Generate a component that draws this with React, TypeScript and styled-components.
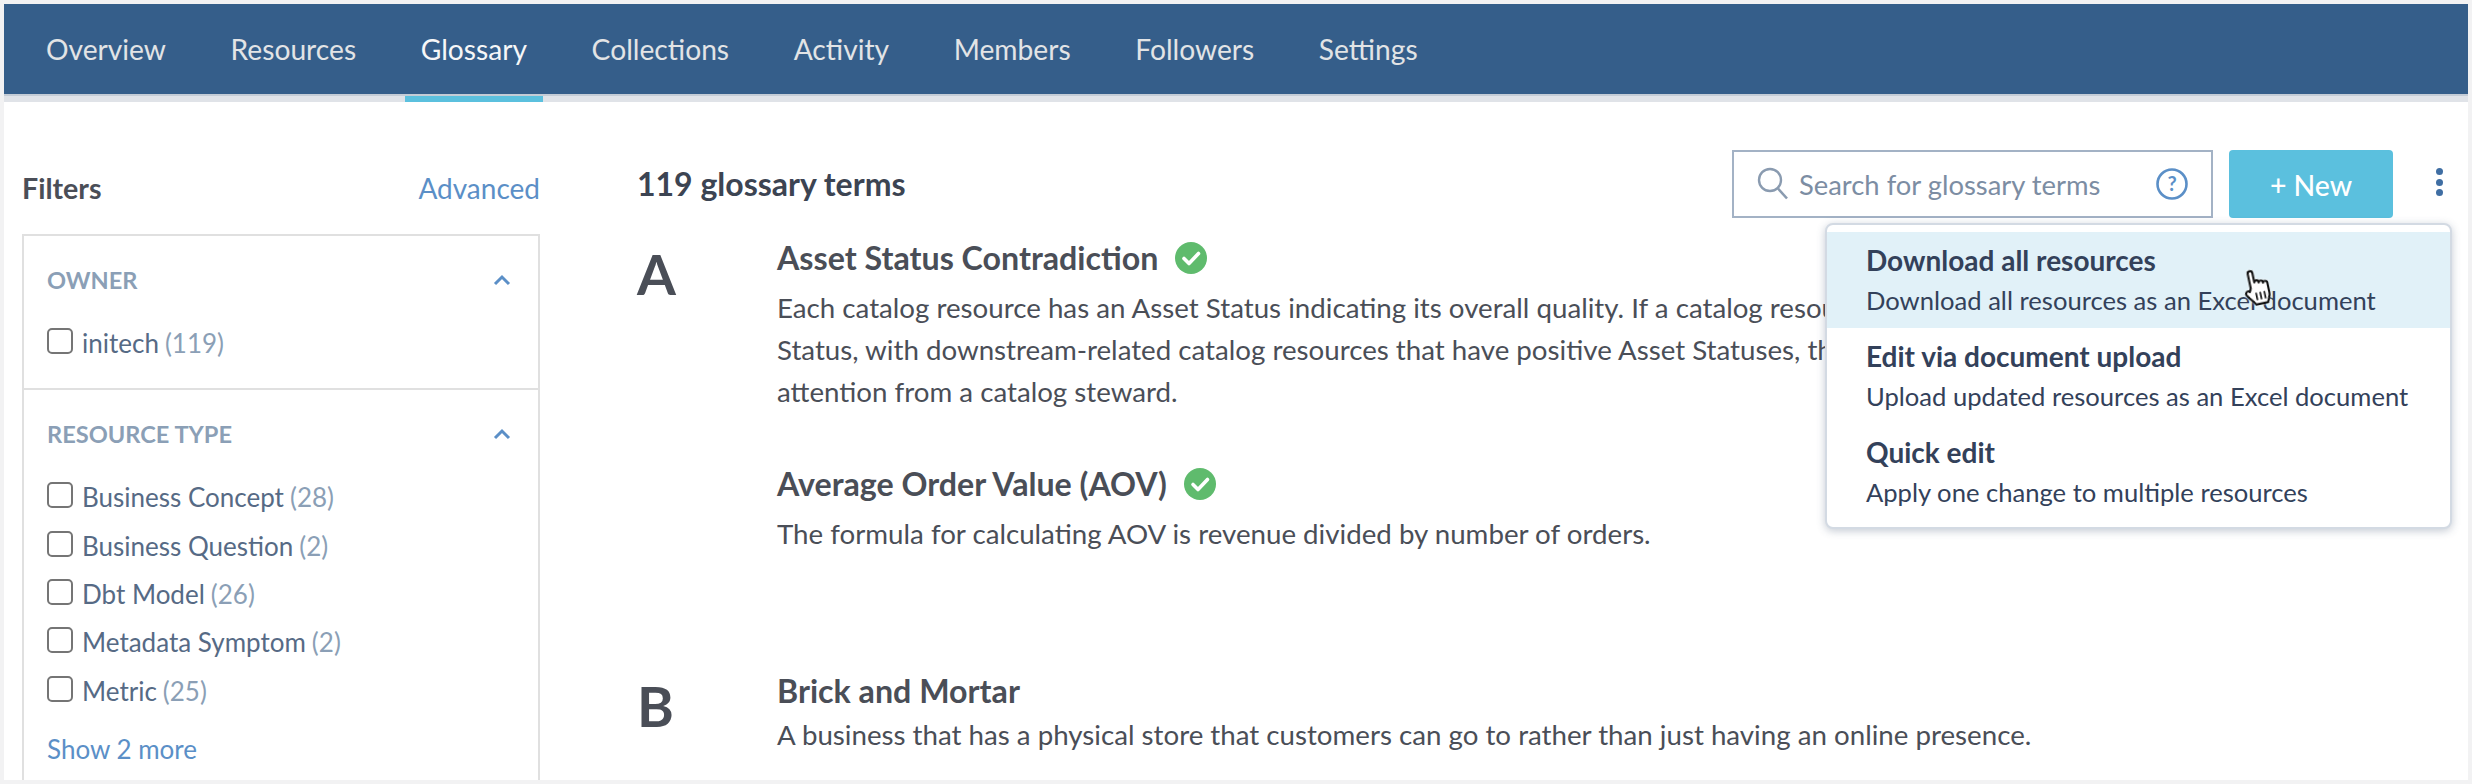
import React from 'react';
import styled, { createGlobalStyle } from 'styled-components';

const Global = createGlobalStyle`
  html, body { margin: 0; padding: 0; background: #f2f2f3; }
  body { font-family: Lato, "Liberation Sans", sans-serif; -webkit-font-smoothing: antialiased; }
  * { box-sizing: border-box; }
`;

const Page = styled.div`
  width: 2472px;
  height: 784px;
  padding: 4px;
  overflow: hidden;
`;
const Frame = styled.div`
  position: relative;
  width: 2464px;
  height: 776px;
  background: #fff;
  overflow: hidden;
`;
const Nav = styled.nav`
  height: 98px;
  background: #e0e3e8;
`;
const NavBar = styled.div`
  height: 90px;
  background: #355e8a;
  display: flex;
  padding-left: 26px;
  box-shadow: 0 2px 0 #c4ccd6;
`;
const Tab = styled.a<{ $active?: boolean }>`
  position: relative;
  display: flex;
  align-items: center;
  height: 90px;
  padding: 0 16px;
  margin-right: 32.6px;
  font-size: 28.2px;
  color: ${p => (p.$active ? '#f6f7f8' : '#e2e4e6')};
  &::after {
    content: '';
    display: ${p => (p.$active ? 'block' : 'none')};
    position: absolute;
    left: 0;
    right: 0;
    top: 92px;
    height: 6px;
    background: #5bc0de;
  }
`;
const Body = styled.div`
  display: flex;
  padding: 0 0 0 18px;
`;
const Sidebar = styled.aside`
  width: 518px;
  flex: none;
  padding-top: 67px;
`;
const SideHead = styled.div`
  display: flex;
  justify-content: space-between;
  align-items: center;
  height: 38px;
  margin-bottom: 27px;
`;
const SideTitle = styled.h3`
  margin: 0;
  font-size: 28.6px;
  line-height: 38px;
  font-weight: 700;
  color: #4a4e57;
`;
const Link = styled.a`
  font-size: 28px;
  color: #5b8fc7;
`;
const FilterBox = styled.div`
  border: 2px solid #e0e0e0;
  border-bottom: 0;
  height: 560px;
`;
const FilterSection = styled.section`
  padding: 26px 23px 0;
  height: 152px;
  & + & {
    border-top: 2px solid #e0e0e0;
    height: 400px;
  }
`;
const FilterHead = styled.div`
  display: flex;
  justify-content: space-between;
  align-items: center;
  height: 36px;
  margin-bottom: 21px;
  padding-right: 4px;
`;
const FilterName = styled.div`
  font-size: 23.6px;
  font-weight: 700;
  color: #8b9fb6;
`;
const Row = styled.label`
  display: flex;
  align-items: center;
  height: 48.4px;
  font-size: 26px;
  color: #566a85;
`;
const Check = styled.span`
  width: 26px;
  height: 26px;
  border: 2px solid #757575;
  border-radius: 5px;
  margin: -4px 9px 0 0;
  flex: none;
`;
const Count = styled.span`
  color: #8b9fb6;
  margin-left: 6px;
`;
const More = styled.a`
  display: block;
  margin-top: 18px;
  font-size: 26px;
  color: #5b8fc7;
`;
const Main = styled.main`
  flex: 1;
  min-width: 0;
  padding: 0 0 0 97px;
`;
const Toolbar = styled.div`
  display: flex;
  align-items: center;
  height: 68px;
  margin: 48px 0 14px;
`;
const Heading = styled.h2`
  margin: 0;
  flex: 1;
  font-size: 32px;
  font-weight: 700;
  color: #3c4452;
  padding-bottom: 2px;
`;
const Search = styled.div`
  width: 481px;
  height: 68px;
  border: 2px solid #a3b2c5;
  display: flex;
  align-items: center;
  padding: 0 23px;
  gap: 10px;
  margin-right: 16px;
`;
const SearchText = styled.span`
  flex: 1;
  font-size: 27.4px;
  color: #7c8da3;
  padding-top: 1px;
`;
const NewButton = styled.button`
  width: 164px;
  height: 68px;
  border: 0;
  border-radius: 4px;
  background: #5bc0de;
  color: #fff;
  font: 500 28.4px Lato, sans-serif;
  padding: 1px 0 0;
  margin-right: 26px;
`;
const Kebab = styled.button`
  width: 40px;
  height: 68px;
  border: 0;
  background: none;
  padding: 0 0 4px;
  margin-right: 9px;
  display: flex;
  flex-direction: column;
  align-items: center;
  justify-content: center;
  gap: 3.5px;
`;
const Dot = styled.i`
  width: 7px;
  height: 7px;
  border-radius: 50%;
  background: #3f6ea3;
`;
const Letter = styled.div<{ $drop: number }>`
  width: 140px;
  flex: none;
  font-size: 56px;
  font-weight: 700;
  color: #4a4e57;
  line-height: 68px;
  margin-top: ${p => p.$drop}px;
`;
const Group = styled.section<{ $top: number }>`
  display: flex;
  margin-top: ${p => p.$top}px;
`;
const Terms = styled.div`
  flex: 1;
  min-width: 0;
`;
const Term = styled.article`
  margin-bottom: 44px;
`;
const TermTitle = styled.h4`
  display: flex;
  align-items: center;
  gap: 17px;
  margin: 0 0 3px;
  min-height: 40px;
  font-size: 32.2px;
  line-height: 40px;
  font-weight: 700;
  color: #4a4e57;
`;
const Badge = styled.svg`
  display: block;
  margin: 10px 0;
`;
const TermText = styled.p`
  margin: 0;
  font-size: 27.7px;
  line-height: 42.2px;
  color: #4a4e57;
  white-space: nowrap;
`;
const Menu = styled.div`
  position: absolute;
  left: 1821px;
  top: 219px;
  width: 627px;
  height: 306px;
  background: #fff;
  border: 2px solid #d3dae3;
  border-radius: 8px;
  box-shadow: 0 2px 8px rgba(60, 80, 110, 0.3);
  padding-top: 7px;
  overflow: hidden;
`;
const MenuItem = styled.div<{ $hover?: boolean }>`
  height: 96px;
  padding: 8px 39px 0;
  background: ${p => (p.$hover ? '#e1f1f8' : 'transparent')};
  color: #33415a;
`;
const MenuTitle = styled.div`
  font-size: 28px;
  font-weight: 700;
  line-height: 40px;
`;
const MenuSub = styled.div`
  font-size: 25.6px;
  line-height: 40px;
  white-space: nowrap;
`;
const Cursor = styled.svg`
  position: absolute;
  left: 2237px;
  top: 264px;
  transform: rotate(-12deg);
  filter: drop-shadow(0 0 1px rgba(255, 255, 255, 0.9));
`;

const CheckBadge = () => (
  <Badge width="32" height="32" viewBox="0 0 32 32">
    <circle cx="16" cy="16" r="16" fill="#5fbb6d" />
    <path d="M9 16.5l5 5 9.500-10" fill="none" stroke="#fff" strokeWidth="3.600" strokeLinecap="round" strokeLinejoin="round" />
  </Badge>
);
const Chevron = () => (
  <svg width="18" height="12" viewBox="0 0 18 12">
    <path d="M2 10l7-7 7 7" fill="none" stroke="#5b8fc7" strokeWidth="3" />
  </svg>
);

const resourceTypes: [string, number][] = [
  ['Business Concept', 28],
  ['Business Question', 2],
  ['Dbt Model', 26],
  ['Metadata Symptom', 2],
  ['Metric', 25],
];
const tabs = ['Overview', 'Resources', 'Glossary', 'Collections', 'Activity', 'Members', 'Followers', 'Settings'];

export default function App() {
  return (
    <Page>
      <Global />
      <Frame>
        <Nav>
          <NavBar>
            {tabs.map(t => (
              <Tab key={t} $active={t === 'Glossary'}>{t}</Tab>
            ))}
          </NavBar>
        </Nav>
        <Body>
          <Sidebar>
            <SideHead>
              <SideTitle>Filters</SideTitle>
              <Link>Advanced</Link>
            </SideHead>
            <FilterBox>
              <FilterSection>
                <FilterHead>
                  <FilterName>OWNER</FilterName>
                  <Chevron />
                </FilterHead>
                <Row><Check />initech<Count>(119)</Count></Row>
              </FilterSection>
              <FilterSection>
                <FilterHead>
                  <FilterName>RESOURCE TYPE</FilterName>
                  <Chevron />
                </FilterHead>
                {resourceTypes.map(([n, c]) => (
                  <Row key={n}><Check />{n}<Count>({c})</Count></Row>
                ))}
                <More>Show 2 more</More>
              </FilterSection>
            </FilterBox>
          </Sidebar>
          <Main>
            <Toolbar>
              <Heading>119 glossary terms</Heading>
              <Search>
                <svg width="32" height="34" viewBox="0 0 32 34">
                  <circle cx="13" cy="13" r="11" fill="none" stroke="#8a9bb0" strokeWidth="2.400" />
                  <path d="M21 21.500l9 10" stroke="#8a9bb0" strokeWidth="2.600" fill="none" />
                </svg>
                <SearchText>Search for glossary terms</SearchText>
                <svg width="32" height="32" viewBox="0 0 32 32">
                  <circle cx="16" cy="16" r="14.500" fill="none" stroke="#5b8fc7" strokeWidth="2.600" />
                  <text x="16" y="23" textAnchor="middle" fontFamily="Lato, sans-serif" fontWeight="700" fontSize="20" fill="#5b8fc7">?</text>
                </svg>
              </Search>
              <NewButton>+ New</NewButton>
              <Kebab><Dot /><Dot /><Dot /></Kebab>
            </Toolbar>
            <Group $top={0}>
              <Letter $drop={8}>A</Letter>
              <Terms>
                <Term>
                  <TermTitle>Asset Status Contradiction <CheckBadge /></TermTitle>
                  <TermText>
                    Each catalog resource has an Asset Status indicating its overall quality. If a catalog resource has a negative Asset<br />
                    Status, with downstream-related catalog resources that have positive Asset Statuses, this contradiction needs<br />
                    attention from a catalog steward.
                  </TermText>
                </Term>
                <Term>
                  <TermTitle>Average Order Value (AOV) <CheckBadge /></TermTitle>
                  <TermText>The formula for calculating AOV is revenue divided by number of orders.</TermText>
                </Term>
              </Terms>
            </Group>
            <Group $top={72}>
              <Letter $drop={1}>B</Letter>
              <Terms>
                <Term>
                  <TermTitle>Brick and Mortar</TermTitle>
                  <TermText>A business that has a physical store that customers can go to rather than just having an online presence.</TermText>
                </Term>
              </Terms>
            </Group>
          </Main>
        </Body>
        <Menu>
          <MenuItem $hover>
            <MenuTitle>Download all resources</MenuTitle>
            <MenuSub>Download all resources as an Excel document</MenuSub>
          </MenuItem>
          <MenuItem>
            <MenuTitle>Edit via document upload</MenuTitle>
            <MenuSub>Upload updated resources as an Excel document</MenuSub>
          </MenuItem>
          <MenuItem>
            <MenuTitle>Quick edit</MenuTitle>
            <MenuSub>Apply one change to multiple resources</MenuSub>
          </MenuItem>
        </Menu>
        <Cursor width="34" height="38" viewBox="0 0 32 36">
          <path d="M9 18V4c0-3 4.500-3 4.500 0v9c0-2 4-2 4 0v1c0-2 4-2 4 0v1c0-2 4-1.500 4 .5V25c0 4-2 6-3 9H11c-1-3-4-5-7-10-1.500-3 1.500-5 3.500-3z" fill="#fff" stroke="#111" strokeWidth="2" strokeLinejoin="round" />
          <path d="M13 23v7M17 23v7M21 23v7" stroke="#111" strokeWidth="1.600" />
        </Cursor>
      </Frame>
    </Page>
  );
}
